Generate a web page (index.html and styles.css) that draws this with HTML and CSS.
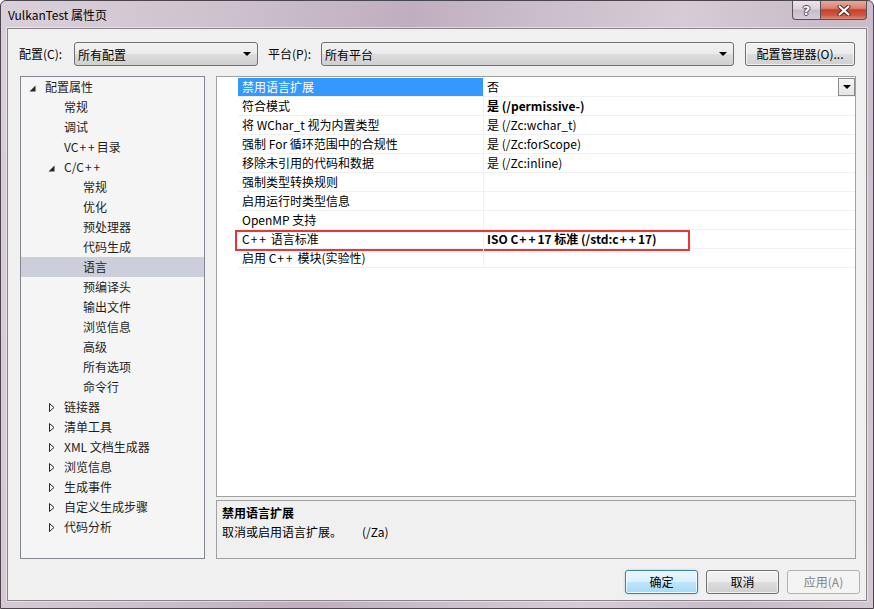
FILE: index.html
```html
<!DOCTYPE html>
<html lang="zh-CN">
<head>
<meta charset="utf-8">
<title>VulkanTest 属性页</title>
<link rel="stylesheet" href="styles.css">
</head>
<body>
<div class="window">
  <div class="titlebar">
    <div class="title">VulkanTest 属性页</div>
    <div class="caption-buttons">
      <div class="cap-btn help">?</div>
      <div class="cap-btn close">
        <svg width="14" height="11" viewBox="0 0 14 11"><path d="M2.5 1.5 L11.5 9.5 M11.5 1.5 L2.5 9.5" stroke="#4a2222" stroke-width="4" stroke-linecap="round"/><path d="M2.5 1.5 L11.5 9.5 M11.5 1.5 L2.5 9.5" stroke="#ffffff" stroke-width="2.2" stroke-linecap="round"/></svg>
      </div>
    </div>
  </div>
  <div class="client">
    <div class="toolbar">
      <span class="lbl lbl-cfg">配置(C):</span>
      <div class="combo combo-cfg"><span>所有配置</span><span class="combo-arrow"></span></div>
      <span class="lbl lbl-plat">平台(P):</span>
      <div class="combo combo-plat"><span>所有平台</span><span class="combo-arrow"></span></div>
      <div class="btn btn-mgr">配置管理器(O)...</div>
    </div>
    <div class="main">
      <div class="tree">
        <div class="trow l0"><span class="tog"><svg width="7" height="7" viewBox="0 0 7 7"><path d="M6.5 0.5 L6.5 6.5 L0.5 6.5 Z" fill="#262626"/></svg></span>配置属性</div>
        <div class="trow l1"><span class="tog"></span>常规</div>
        <div class="trow l1"><span class="tog"></span>调试</div>
        <div class="trow l1"><span class="tog"></span>VC<span class="pp">++</span> 目录</div>
        <div class="trow l1"><span class="tog"><svg width="7" height="7" viewBox="0 0 7 7"><path d="M6.5 0.5 L6.5 6.5 L0.5 6.5 Z" fill="#262626"/></svg></span>C/C<span class="pp">++</span></div>
        <div class="trow l2"><span class="tog"></span>常规</div>
        <div class="trow l2"><span class="tog"></span>优化</div>
        <div class="trow l2"><span class="tog"></span>预处理器</div>
        <div class="trow l2"><span class="tog"></span>代码生成</div>
        <div class="trow l2 sel"><span class="tog"></span>语言</div>
        <div class="trow l2"><span class="tog"></span>预编译头</div>
        <div class="trow l2"><span class="tog"></span>输出文件</div>
        <div class="trow l2"><span class="tog"></span>浏览信息</div>
        <div class="trow l2"><span class="tog"></span>高级</div>
        <div class="trow l2"><span class="tog"></span>所有选项</div>
        <div class="trow l2"><span class="tog"></span>命令行</div>
        <div class="trow l1"><span class="tog"><svg width="6" height="9" viewBox="0 0 6 9"><path d="M0.5 0.5 L5 4.5 L0.5 8.5 Z" fill="none" stroke="#262626"/></svg></span>链接器</div>
        <div class="trow l1"><span class="tog"><svg width="6" height="9" viewBox="0 0 6 9"><path d="M0.5 0.5 L5 4.5 L0.5 8.5 Z" fill="none" stroke="#262626"/></svg></span>清单工具</div>
        <div class="trow l1"><span class="tog"><svg width="6" height="9" viewBox="0 0 6 9"><path d="M0.5 0.5 L5 4.5 L0.5 8.5 Z" fill="none" stroke="#262626"/></svg></span>XML 文档生成器</div>
        <div class="trow l1"><span class="tog"><svg width="6" height="9" viewBox="0 0 6 9"><path d="M0.5 0.5 L5 4.5 L0.5 8.5 Z" fill="none" stroke="#262626"/></svg></span>浏览信息</div>
        <div class="trow l1"><span class="tog"><svg width="6" height="9" viewBox="0 0 6 9"><path d="M0.5 0.5 L5 4.5 L0.5 8.5 Z" fill="none" stroke="#262626"/></svg></span>生成事件</div>
        <div class="trow l1"><span class="tog"><svg width="6" height="9" viewBox="0 0 6 9"><path d="M0.5 0.5 L5 4.5 L0.5 8.5 Z" fill="none" stroke="#262626"/></svg></span>自定义生成步骤</div>
        <div class="trow l1"><span class="tog"><svg width="6" height="9" viewBox="0 0 6 9"><path d="M0.5 0.5 L5 4.5 L0.5 8.5 Z" fill="none" stroke="#262626"/></svg></span>代码分析</div>
      </div>
      <div class="right">
        <div class="grid">
          <div class="grow active"><div class="gname">禁用语言扩展</div><div class="gval">否<span class="gdrop"><span class="combo-arrow"></span></span></div></div>
          <div class="grow"><div class="gname">符合模式</div><div class="gval b">是 (/permissive-)</div></div>
          <div class="grow"><div class="gname">将 WChar_t 视为内置类型</div><div class="gval">是 (/Zc:wchar_t)</div></div>
          <div class="grow"><div class="gname">强制 For 循环范围中的合规性</div><div class="gval">是 (/Zc:forScope)</div></div>
          <div class="grow"><div class="gname">移除未引用的代码和数据</div><div class="gval">是 (/Zc:inline)</div></div>
          <div class="grow"><div class="gname">强制类型转换规则</div><div class="gval"></div></div>
          <div class="grow"><div class="gname">启用运行时类型信息</div><div class="gval"></div></div>
          <div class="grow"><div class="gname">OpenMP 支持</div><div class="gval"></div></div>
          <div class="grow marked"><div class="gname">C<span class="pp">++</span> 语言标准</div><div class="gval b">ISO C<span class="pp">++</span>17 标准 (/std:c<span class="pp">++</span>17)</div><div class="redbox"></div></div>
          <div class="grow"><div class="gname">启用 C<span class="pp">++</span> 模块(实验性)</div><div class="gval"></div></div>
        </div>
        <div class="desc">
          <div class="desc-title">禁用语言扩展</div>
          <div class="desc-text">取消或启用语言扩展。<span class="desc-flag">(/Za)</span></div>
        </div>
      </div>
    </div>
    <div class="footer">
      <div class="btn btn-ok">确定</div>
      <div class="btn">取消</div>
      <div class="btn disabled">应用(A)</div>
    </div>
  </div>
</div>
</body>
</html>
```

FILE: styles.css
```css
* { box-sizing: border-box; margin: 0; padding: 0; }
html, body { width: 874px; height: 609px; overflow: hidden; }
body {
  font-family: "Noto Sans CJK SC", "Noto Sans", sans-serif;
  font-size: 12px;
  color: #000;
  background: #fff;
}

.window {
  width: 874px;
  height: 609px;
  display: flex;
  flex-direction: column;
  border: 1px solid #4b454e;
  border-radius: 6px 6px 0 0;
  background: linear-gradient(100deg, #dad0da 0%, #cfc2cf 22%, #bfaebf 42%, #cbbdcb 55%, #d6cbd6 70%, #c8bac8 86%, #d3c7d3 100%);
}

.titlebar {
  height: 27px;
  display: flex;
  justify-content: space-between;
  align-items: flex-start;
  padding-left: 7px;
}
.title {
  padding-top: 6px;
  line-height: 16px;
  color: #000;
}
.caption-buttons {
  display: flex;
  margin-right: 6px;
}
.cap-btn {
  height: 19px;
  border: 1px solid #5b4f5e;
  border-top: none;
  display: flex;
  align-items: center;
  justify-content: center;
}
.help {
  width: 28px;
  border-right: none;
  border-radius: 0 0 0 4px;
  background: linear-gradient(#ece5ec, #dcd2dc 45%, #c8bbc8 50%, #d6cbd6 100%);
  color: #fff;
  font-family: "DejaVu Sans", sans-serif;
  font-weight: bold;
  font-size: 13px;
  text-shadow: 0 0 1px #3a3040, 1px 0 0 #5a5060, -1px 0 0 #5a5060, 0 1px 0 #5a5060, 0 -1px 0 #5a5060;
}
.close {
  width: 47px;
  border-radius: 0 0 4px 0;
  background: linear-gradient(#e8a899, #d98373 40%, #c2412f 50%, #cf5a45 80%, #e08c73 100%);
}

.client {
  flex: 1;
  margin: 0 6px 7px 6px;
  border: 1px solid #878387;
  box-shadow: 0 0 0 1px rgba(255,255,255,0.45);
  background: #f0f0f0;
  display: flex;
  flex-direction: column;
}

.toolbar {
  display: flex;
  align-items: center;
  height: 24px;
  margin-top: 13px;
  padding-left: 11px;
}
.lbl { line-height: 24px; }
.lbl-cfg { width: 55px; }
.lbl-plat { width: 53px; margin-left: 10px; }
.combo {
  height: 24px;
  border: 1px solid #707070;
  border-radius: 3px;
  background: linear-gradient(#f2f2f2, #ebebeb 50%, #dddddd 50%, #cfcfcf);
  display: flex;
  align-items: center;
  justify-content: space-between;
  padding: 0 6px 0 3px;
}
.combo-cfg { width: 184px; }
.combo-plat { width: 413px; }
.combo-arrow {
  width: 0;
  height: 0;
  border-left: 4px solid transparent;
  border-right: 4px solid transparent;
  border-top: 4px solid #000;
}

.btn {
  width: 73px;
  height: 24px;
  border: 1px solid #707070;
  border-radius: 3px;
  background: linear-gradient(#f2f2f2, #ebebeb 50%, #dddddd 50%, #cfcfcf);
  display: flex;
  align-items: center;
  justify-content: center;
  line-height: 16px;
  box-shadow: inset 0 0 0 1px rgba(255,255,255,0.7);
}
.btn-mgr { width: 110px; margin-left: 11px; }
.btn-ok {
  border-color: #3c7fb1;
  background: linear-gradient(#eaf6fd, #d9f0fc 50%, #bee6fd 50%, #a7d9f5);
  box-shadow: inset 0 0 0 1px rgba(255,255,255,0.8), 0 0 2px rgba(80,170,230,0.6);
}
.btn.disabled {
  border-color: #adb2b5;
  background: #f4f4f4;
  color: #838383;
  box-shadow: none;
}

.pp { letter-spacing: 2px; padding-left: 1px; }

.main {
  display: flex;
  gap: 11px;
  height: 483px;
  margin-top: 10px;
  padding-left: 12px;
}

.tree {
  width: 185px;
  border: 1px solid #828790;
  background: #f5f5f5;
  color: #1e1e1e;
}
.trow {
  height: 20px;
  line-height: 20px;
  display: flex;
  align-items: center;
  white-space: nowrap;
}
.trow.l0 { padding-left: 5px; }
.trow.l1 { padding-left: 24px; }
.trow.l2 { padding-left: 43px; }
.trow.sel { background: #cccedb; }
.tog {
  width: 19px;
  height: 20px;
  display: flex;
  align-items: center;
  padding-left: 3px;
}
.tog svg { display: block; margin-top: 2px; }
.trow.l1 .tog svg[height="9"] { margin-left: 1px; margin-top: 0; }

.right {
  width: 640px;
  display: flex;
  flex-direction: column;
  gap: 3px;
}

.grid {
  height: 421px;
  border: 1px solid #a0a0a0;
  background: #fff;
  padding-top: 1px;
}
.grow {
  position: relative;
  height: 19px;
  margin-left: 21px;
  display: flex;
  border-bottom: 1px solid #eef0f4;
  line-height: 18px;
  white-space: nowrap;
}
.gname {
  width: 246px;
  padding-left: 4px;
  border-right: 1px solid #eef0f4;
}
.gval {
  flex: 1;
  padding-left: 3px;
  display: flex;
  align-items: center;
}
.gval.b { font-weight: bold; }
.grow.active .gname { background: #3399ff; color: #fff; }
.gdrop {
  margin-left: auto;
  width: 17px;
  height: 18px;
  border: 1px solid #8c8c8c;
  background: linear-gradient(#f6f6f6, #e4e4e4);
  display: flex;
  align-items: center;
  justify-content: center;
}
.redbox {
  position: absolute;
  left: -3px;
  top: 0;
  width: 455px;
  height: 21px;
  border: 2px solid #ee3535;
  pointer-events: none;
}

.desc {
  flex: 1;
  border: 1px solid #a0a0a0;
  background: #f0f0f0;
  padding: 2px 5px;
  line-height: 19px;
}
.desc-title { font-weight: bold; }
.desc-flag { margin-left: 20px; }

.footer {
  display: flex;
  justify-content: flex-end;
  gap: 8px;
  margin-top: 11px;
  padding-right: 6px;
}
```
